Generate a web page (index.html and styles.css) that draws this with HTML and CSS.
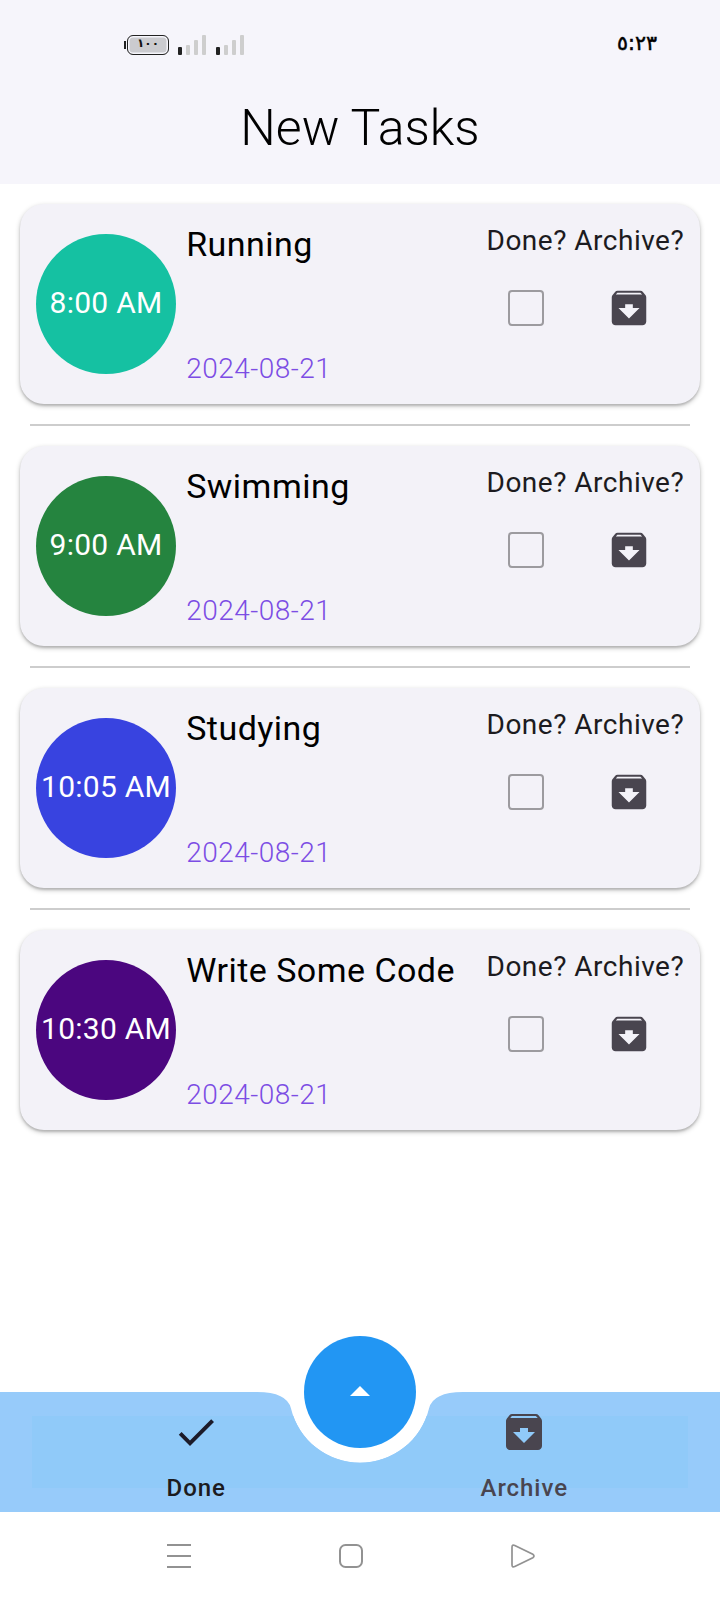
FILE: index.html
```html
<!DOCTYPE html>
<html lang="en">
<head>
<meta charset="utf-8">
<title>New Tasks</title>
<link rel="stylesheet" href="styles.css">
</head>
<body>
<svg class="defs" width="0" height="0">
  <symbol id="archive" viewBox="0 0 24 24"><path d="M20.54 5.23l-1.39-1.68C18.88 3.21 18.47 3 18 3H6c-.47 0-.88.21-1.16.55L3.46 5.23C3.17 5.57 3 6.02 3 6.5V19c0 1.1.9 2 2 2h14c1.1 0 2-.9 2-2V6.5c0-.48-.17-.93-.46-1.27zM12 17.5L6.5 12H10v-2h4v2h3.5L12 17.5zM5.12 5l.81-1h12l.94 1H5.12z"/></symbol>
</svg>
<header class="header">
  <div class="status">
    <div class="status-icons">
      <div class="battery"><span class="battery-level">١٠٠</span></div>
      <div class="signal"><i class="s1"></i><i class="s2"></i><i class="s3"></i><i class="s4"></i></div>
      <div class="signal"><i class="s1"></i><i class="s2"></i><i class="s3"></i><i class="s4"></i></div>
    </div>
    <div class="clock">٥:٢٣</div>
  </div>
  <h1 class="title">New Tasks</h1>
</header>
<main class="tasks">
  <article class="card">
    <div class="time teal">8:00 AM</div>
    <div class="info"><div class="name">Running</div><div class="date">2024-08-21</div></div>
    <div class="actions">
      <div class="labels">Done? Archive?</div>
      <div class="controls"><span class="check"></span><svg class="archive"><use href="#archive"/></svg></div>
    </div>
  </article>
  <div class="divider"></div>
  <article class="card">
    <div class="time green">9:00 AM</div>
    <div class="info"><div class="name">Swimming</div><div class="date">2024-08-21</div></div>
    <div class="actions">
      <div class="labels">Done? Archive?</div>
      <div class="controls"><span class="check"></span><svg class="archive"><use href="#archive"/></svg></div>
    </div>
  </article>
  <div class="divider"></div>
  <article class="card">
    <div class="time blue">10:05 AM</div>
    <div class="info"><div class="name">Studying</div><div class="date">2024-08-21</div></div>
    <div class="actions">
      <div class="labels">Done? Archive?</div>
      <div class="controls"><span class="check"></span><svg class="archive"><use href="#archive"/></svg></div>
    </div>
  </article>
  <div class="divider"></div>
  <article class="card">
    <div class="time indigo">10:30 AM</div>
    <div class="info"><div class="name">Write Some Code</div><div class="date">2024-08-21</div></div>
    <div class="actions">
      <div class="labels">Done? Archive?</div>
      <div class="controls"><span class="check"></span><svg class="archive"><use href="#archive"/></svg></div>
    </div>
  </article>
</main>
<nav class="bar">
  <svg class="bar-shape" viewBox="0 0 720 120">
    <clipPath id="notch"><path d="M0 0H257Q287 0 291 16.5A71 71 0 0 0 429 16.5Q433 0 463 0H720V120H0z"/></clipPath>
    <g clip-path="url(#notch)"><rect class="bar-outer" width="720" height="120"/><rect class="bar-inner" x="32" y="24" width="656" height="72"/></g>
  </svg>
  <div class="tab active">
    <svg class="tab-icon" viewBox="0 0 24 24"><path d="M9 16.2L4.8 12l-1.4 1.4L9 19 21 7l-1.4-1.4L9 16.2z"/></svg>
    <span>Done</span>
  </div>
  <div class="tab">
    <svg class="tab-icon"><use href="#archive"/></svg>
    <span>Archive</span>
  </div>
  <div class="fab"><svg class="caret" viewBox="0 0 24 24"><path d="M7 14l5-5 5 5z"/></svg></div>
</nav>
<footer class="system">
  <svg class="sys-icon" viewBox="0 0 24 24"><path d="M0 1H24M0 12H24M0 23H24"/></svg>
  <svg class="sys-icon" viewBox="0 0 24 24"><rect x="1" y="1" width="22" height="22" rx="5.5"/></svg>
  <svg class="sys-icon thin" viewBox="0 0 24 24"><path d="M1 3.2V20.8Q1 23.8 3.8 22.5L21.8 13.8Q24.2 12 21.8 10.3L3.8 1.5Q1 .2 1 3.2z"/></svg>
</footer>
</body>
</html>
```
FILE: styles.css
```css
* { box-sizing: border-box; }
body {
  margin: 0;
  width: 720px;
  height: 1600px;
  display: flex;
  flex-direction: column;
  background: #fff;
  font-family: Roboto, "Liberation Sans", sans-serif;
  overflow: hidden;
}
.defs { position: absolute; }
.header { height: 184px; background: #f6f5fb; flex: none; }
.status {
  height: 90px;
  padding: 0 63px 0 124px;
  display: flex;
  justify-content: space-between;
  align-items: center;
}
.status-icons { display: flex; align-items: flex-end; gap: 9px; height: 20px; }
.battery {
  width: 45px;
  height: 20px;
  padding-left: 3px;
  background: linear-gradient(#222, #222) 0 6px / 2px 8px no-repeat;
}
.battery-level {
  display: block;
  width: 42px;
  height: 20px;
  border: 1.5px solid #222;
  border-radius: 6px;
  background: #cbcbcf;
  box-shadow: inset 0 0 0 1.5px #f6f5fb;
  font: bold 12px/15px "DejaVu Sans", sans-serif;
  letter-spacing: -1px;
  text-align: center;
  color: #111;
}
.signal { display: flex; align-items: flex-end; gap: 4px; width: 29px; }
.signal i { width: 4px; border-radius: 1px; background: #cecece; }
.signal .s1 { height: 8px; background: #222; }
.signal .s2 { height: 10px; }
.signal .s3 { height: 15px; }
.signal .s4 { height: 20px; }
.clock {
  font: 20.5px/24px "DejaVu Sans", sans-serif;
  color: #000;
  -webkit-text-stroke: .5px #000;
  padding-bottom: 4px;
}
.title {
  margin: 9px 0 0;
  text-align: center;
  font-size: 50px;
  line-height: 58px;
  font-weight: 300;
  color: #000;
}
.tasks { padding: 20px 20px 0; flex: 1; }
.card {
  height: 200px;
  padding: 20px 15.5px 20px 16px;
  display: flex;
  border-radius: 24px;
  background: #f3f2f8;
  box-shadow: 0 2px 5px rgba(0,0,0,.25), 0 2px 2px rgba(0,0,0,.12);
}
.time {
  width: 140px;
  height: 140px;
  margin: 10px 10.2px 10px 0;
  border-radius: 50%;
  color: #fff;
  font-size: 30px;
  line-height: 138px;
  letter-spacing: .25px;
  text-align: center;
  white-space: nowrap;
  flex: none;
}
.teal { background: #15c1a2; }
.green { background: #25843f; }
.blue { background: #3843e0; }
.indigo { background: #4b067f; }
.info { flex: 1; display: flex; flex-direction: column; justify-content: space-between; }
.name { font-size: 34px; line-height: 40px; letter-spacing: .47px; color: #000; white-space: nowrap; }
.date { font-size: 28px; line-height: 32px; letter-spacing: .47px; font-weight: 300; color: #7c4de4; margin-bottom: -1px; }
.actions { width: 198px; flex: none; }
.labels { padding-top: 1px; font-size: 28px; line-height: 32px; letter-spacing: .5px; color: #1c1b20; white-space: nowrap; }
.controls { display: flex; align-items: center; height: 46px; margin-top: 28px; padding-left: 21.5px; gap: 62px; }
.check { width: 36px; height: 36px; border: 2px solid #9c9b9f; border-radius: 4px; }
.archive { width: 46px; height: 46px; fill: #49454f; }
.divider { height: 2px; margin: 20px 10px; background: #cdcdcd; }
.bar { position: relative; height: 120px; padding: 0 32px; display: flex; flex: none; }
.bar-shape { position: absolute; left: 0; top: 0; width: 720px; height: 120px; }
.bar-outer { fill: #97cbfa; }
.bar-inner { fill: #90caf9; }
.tab {
  position: relative;
  flex: 1;
  padding-top: 16px;
  display: flex;
  flex-direction: column;
  align-items: center;
  gap: 17px;
  color: #49454f;
  font-size: 24px;
  line-height: 30px;
  font-weight: 500;
  letter-spacing: .95px;
}
.tab span { padding-left: .5px; }
.tab-icon { width: 48px; height: 48px; fill: #49454f; }
.active { color: #1c1b20; }
.active .tab-icon { fill: #1c1b2a; }
.fab {
  position: absolute;
  left: 304px;
  top: -56px;
  width: 112px;
  height: 112px;
  border-radius: 50%;
  background: #2296f3;
  display: flex;
  align-items: center;
  justify-content: center;
}
.caret { width: 48px; height: 48px; fill: #fff; }
.system { height: 88px; padding: 0 185px 0 167px; display: flex; justify-content: space-between; align-items: center; flex: none; }
.sys-icon { width: 24px; height: 24px; fill: none; stroke: #929292; stroke-width: 2; }
.thin { stroke-width: 1.7; }
```
